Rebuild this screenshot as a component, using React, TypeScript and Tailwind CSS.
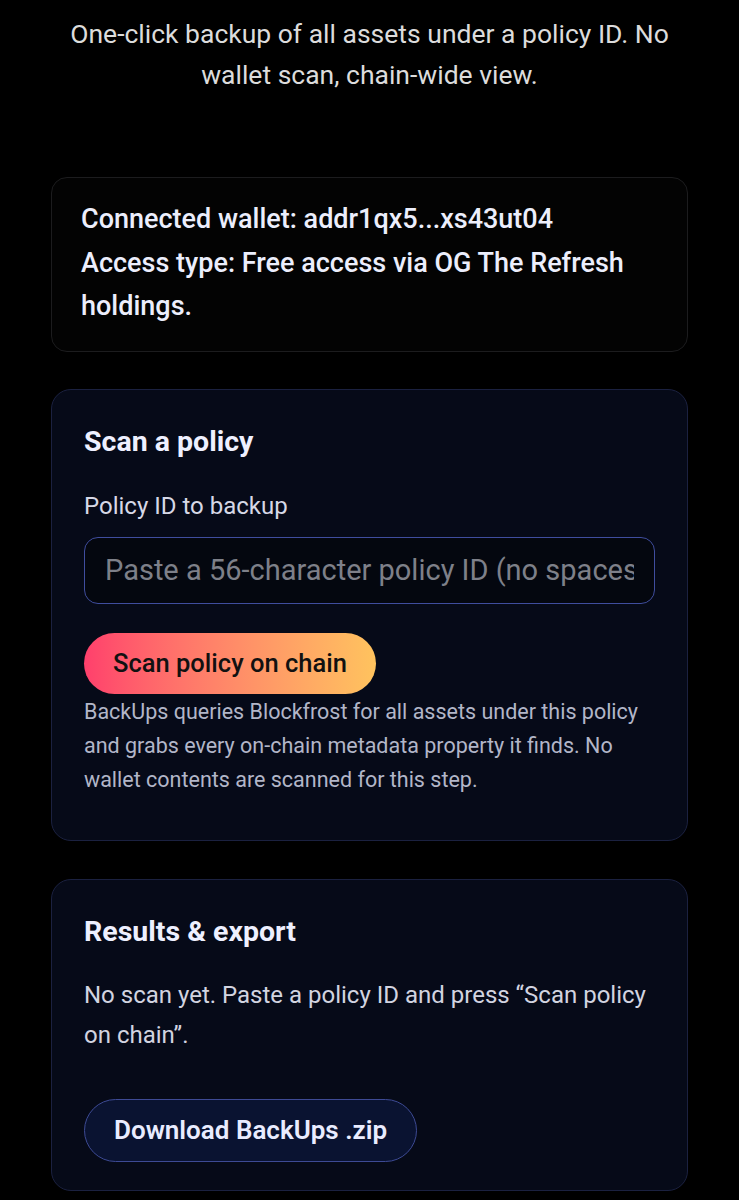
import { useState } from 'react';

const Card = ({ children, className }: { children: React.ReactNode; className: string }) => (
  <section className={`rounded-[20px] border ${className}`}>{children}</section>
);

export default function App() {
  const [policyId, setPolicyId] = useState('');

  return (
    <div className="min-h-screen bg-black px-[51px] pt-[13px] font-['Roboto',sans-serif]">
      <p className="text-center text-[26.5px] leading-[41px] text-[#dcdcdc]">
        One-click backup of all assets under a policy ID. No wallet scan, chain-wide view.
      </p>

      <div className="mt-[82px] rounded-[16px] border border-[#1c1c1e] bg-[#030303] px-[29px] pt-[20px] pb-[22px] text-[27px] font-medium leading-[43.5px] text-[#eceefc]">
        <p>Connected wallet: addr1qx5...xs43ut04</p>
        <p>Access type: Free access via OG The Refresh holdings.</p>
      </div>

      <Card className="mt-[37px] border-[#1b2140] bg-[#060a18] px-[32px] pt-[36px] pb-[43px]">
        <h2 className="text-[28.5px] font-bold leading-[32px] text-[#eef0ff]">Scan a policy</h2>
        <label className="mt-[33px] block text-[24px] leading-[30px] text-[#d6d8e6]">Policy ID to backup</label>
        <input
          value={policyId}
          onChange={(e) => setPolicyId(e.target.value)}
          placeholder="Paste a 56-character policy ID (no spaces)"
          className="mt-[16px] block h-[67px] w-full rounded-[14px] border border-[#3f4d9e] bg-[#04070f] px-[20px] text-[29px] text-[#e8eaf5] outline-none placeholder:text-[#7e8089]"
        />
        <button className="mt-[29px] block h-[61px] rounded-full bg-gradient-to-r from-[#ff3f6c] to-[#ffc35e] px-[29px] text-[25.5px] font-medium text-[#111]">
          Scan policy on chain
        </button>
        <p className="mt-px text-[21.5px] leading-[34px] text-[#b2b6c8]">
          BackUps queries Blockfrost for all assets under this policy and grabs every on-chain metadata property it
          finds. No wallet contents are scanned for this step.
        </p>
      </Card>

      <Card className="mt-[38px] border-[#1b2140] bg-[#060a18] px-[32px] pt-[36px] pb-[28px]">
        <h2 className="text-[28.5px] font-bold leading-[32px] text-[#eef0ff]">Results &amp; export</h2>
        <p className="mt-[27px] text-[24px] leading-[40px] text-[#d2d4e0]">
          No scan yet. Paste a policy ID and press “Scan policy on chain”.
        </p>
        <button className="mt-[44px] block h-[63px] rounded-full border border-[#3d4a94] bg-[#0a1331] px-[29px] text-[26px] font-semibold text-[#e9ecff]">
          Download BackUps .zip
        </button>
      </Card>
    </div>
  );
}
